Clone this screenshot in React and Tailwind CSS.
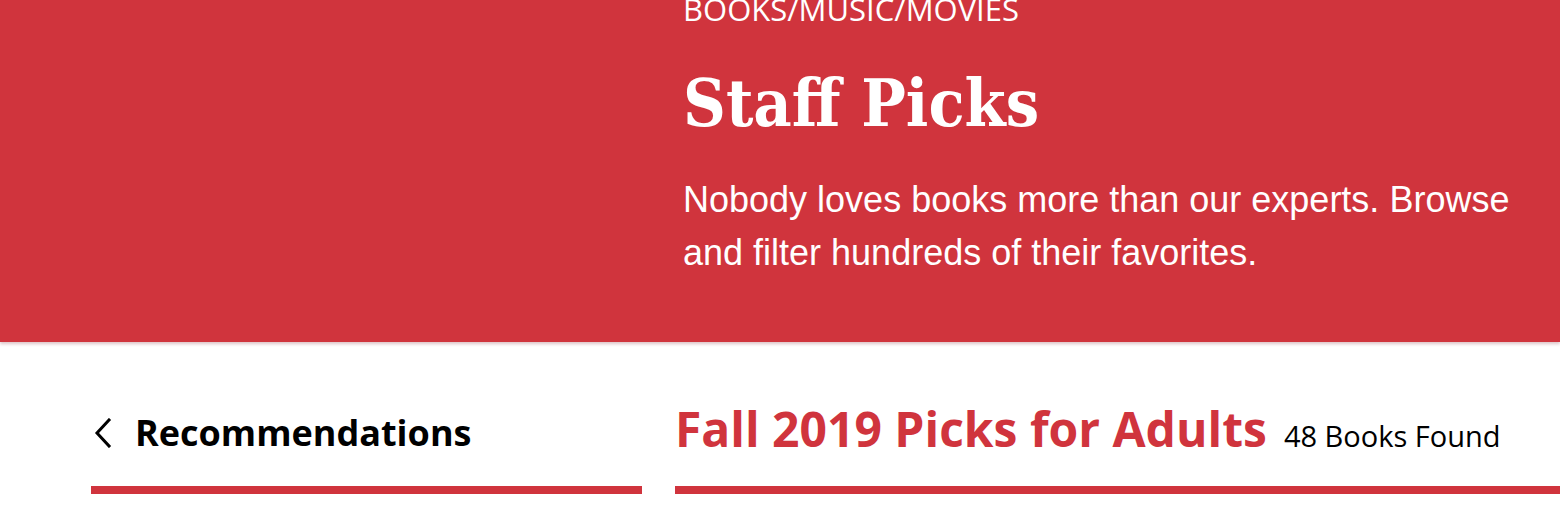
import React from "react";

const red = "bg-[#d0343d]";

const Hero = () => {
  return (
    <div className={`${red} relative z-10 h-[342px] overflow-hidden pl-[683px] text-white shadow-[0_2px_3px_rgba(120,20,30,0.25)]`}>
      <p className="-mt-[9px] text-[31px] leading-[36px] font-['Open_Sans',sans-serif] uppercase">
        Books/Music/Movies
      </p>
      <h1 className="mt-[36px] text-[66px] leading-[80px] font-bold font-stretch-condensed font-['DejaVu_Serif',serif]">
        Staff Picks
      </h1>
      <p className="mt-[30px] max-w-[860px] text-[36px] leading-[53px] font-['Liberation_Sans',Arial,sans-serif]">
        Nobody loves books more than our experts. Browse and filter hundreds of their favorites.
      </p>
    </div>
  );
};

const Chevron = () => (
  <svg width="20" height="30" viewBox="0 0 20 30" fill="none" stroke="currentColor" strokeWidth="3" strokeLinecap="square">
    <path d="M16 2 L4 15 L16 28" />
  </svg>
);

const App = () => {
  return (
    <div className="min-h-[523px] bg-white font-['Open_Sans',sans-serif]">
      <Hero />
      <div className="flex gap-[33px] pl-[91px] overflow-hidden">
        {/* left column */}
        <div className="w-[551px] shrink-0 pt-[61px]">
          <div className="flex h-[60px] items-center gap-[22px] pl-[2px] text-black">
            <Chevron />
            <span className="text-[36px] leading-[60px] font-bold">Recommendations</span>
          </div>
          <div className={`mt-[23px] h-[8px] ${red}`} />
        </div>
        {/* right column */}
        <div className="flex-1 pt-[57px]">
          <div className="flex h-[60px] items-baseline gap-[17px] whitespace-nowrap">
            <h2 className="text-[48px] leading-[60px] font-bold text-[#d0343d]">Fall 2019 Picks for Adults</h2>
            <span className="text-[29px] leading-none text-black">48 Books Found</span>
          </div>
          <div className={`mt-[27px] h-[8px] ${red}`} />
        </div>
      </div>
    </div>
  );
};

export default App;
